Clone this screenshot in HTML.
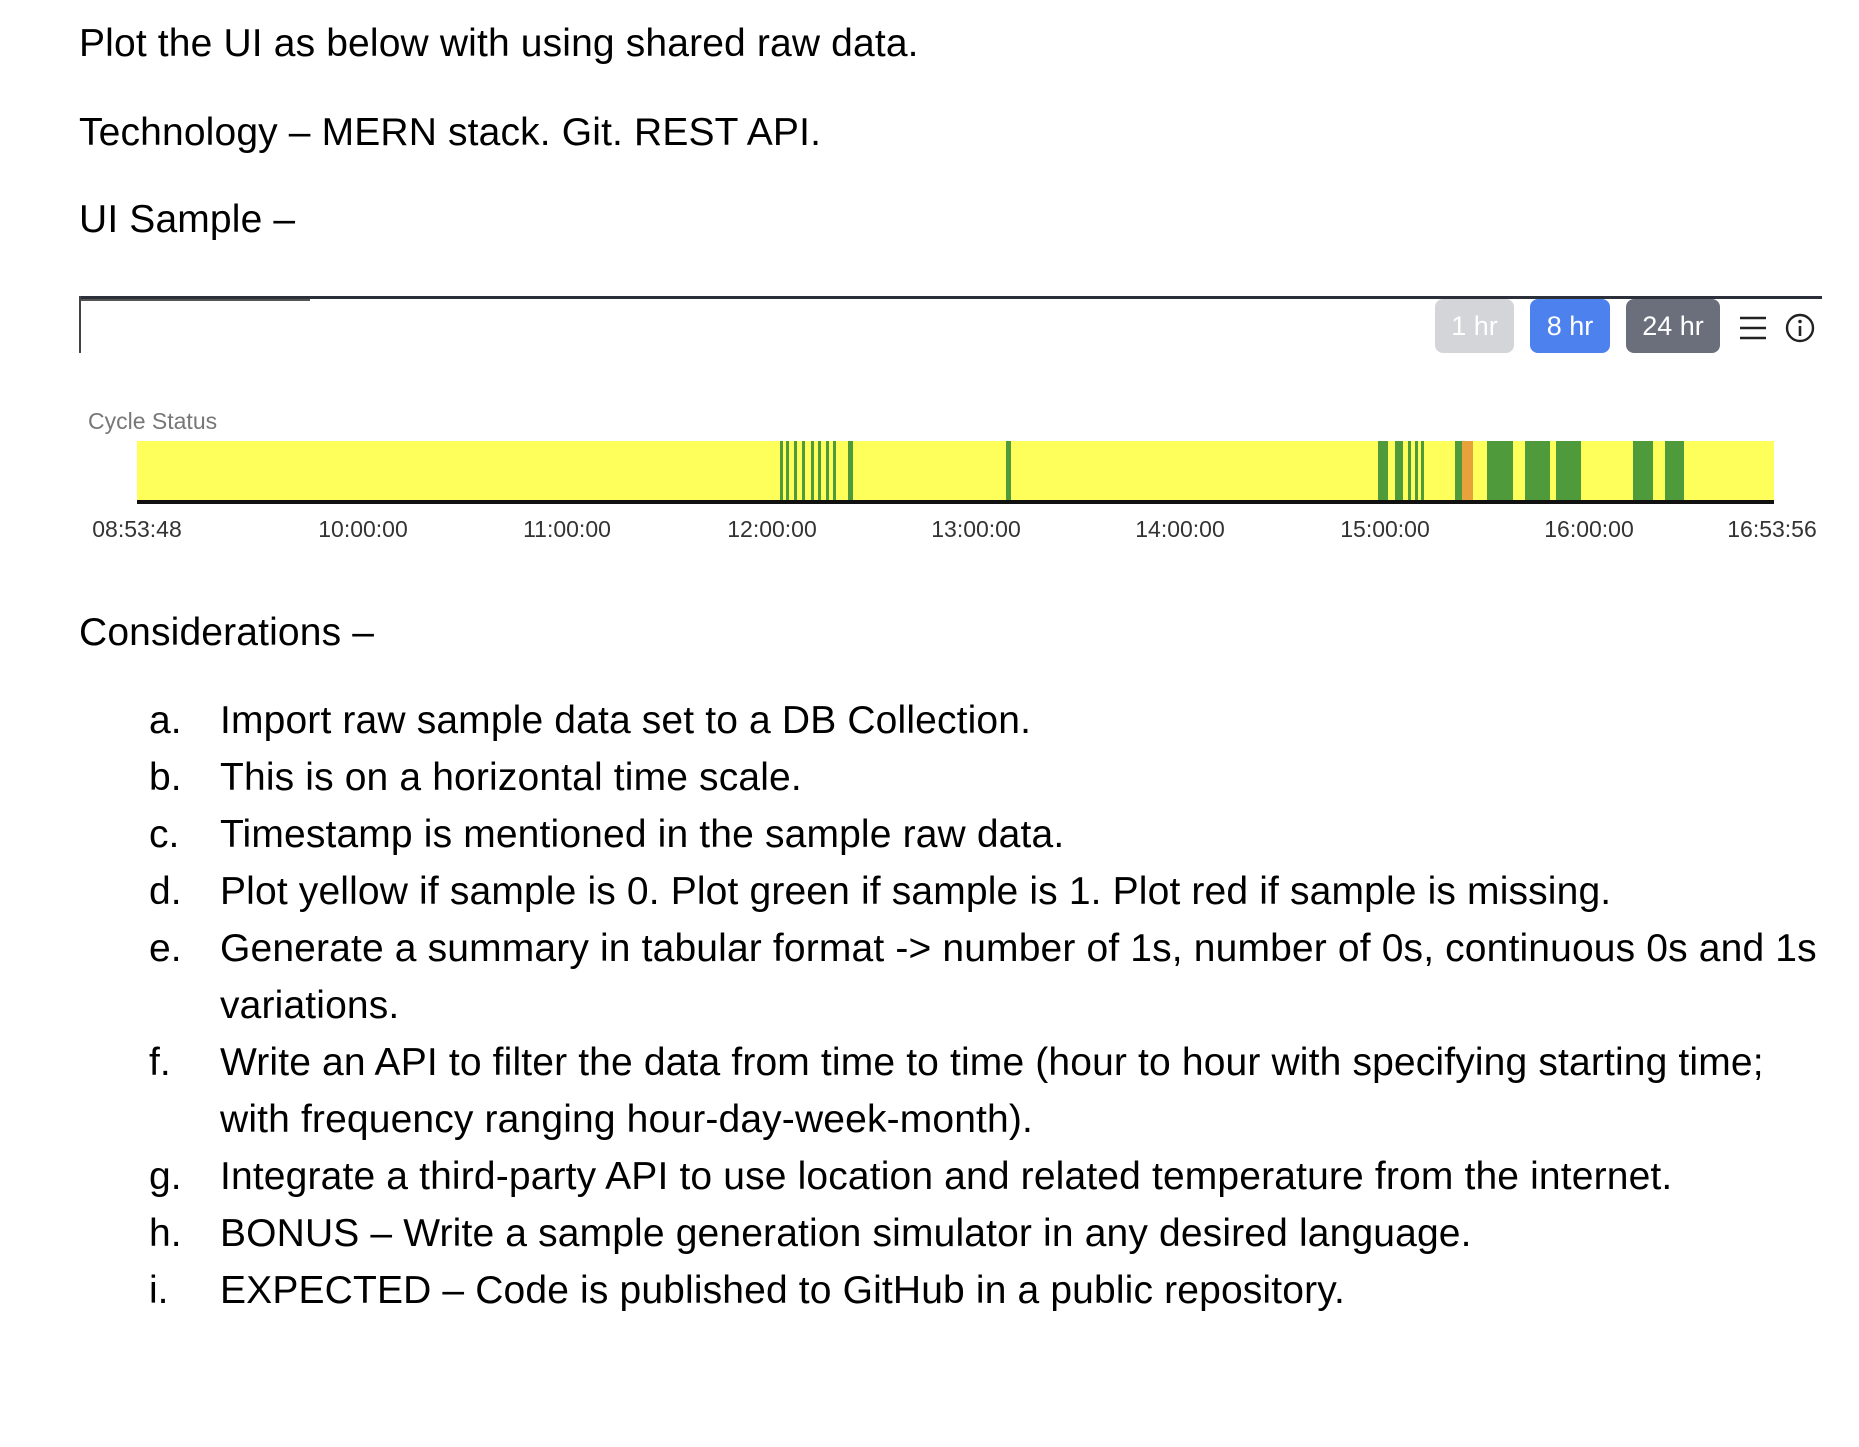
<!DOCTYPE html>
<html><head><meta charset="utf-8"><style>
*{margin:0;padding:0;box-sizing:border-box}
body{width:1859px;height:1447px;background:#fff;position:relative;overflow:hidden;font-family:"Liberation Sans",sans-serif;color:#000}
.t{position:absolute;font-size:39px;line-height:40px;white-space:nowrap;letter-spacing:0.15px}
.lt{position:absolute;font-size:39px;line-height:40px;left:149px}
.tk{position:absolute;top:515px;font-size:23px;line-height:28px;color:#333;transform:translateX(-50%);white-space:nowrap}
.g{position:absolute;top:441px;height:61px;background:#4f9a3b}
.btn{position:absolute;top:299px;height:54px;border-radius:8px;color:#fff;font-size:27px;line-height:54px;text-align:center}
</style></head><body>
<div class="t" style="left:79px;top:24px">Plot the UI as below with using shared raw data.</div>
<div class="t" style="left:79px;top:113px">Technology – MERN stack. Git. REST API.</div>
<div class="t" style="left:79px;top:200px">UI Sample –</div>

<div style="position:absolute;left:79px;top:296px;width:1743px;height:3px;background:#2b2f3a"></div>
<div style="position:absolute;left:79px;top:299px;width:231px;height:2px;background:#555"></div>
<div style="position:absolute;left:79px;top:296px;width:2px;height:57px;background:#444"></div>
<div class="btn" style="left:1435px;width:79px;background:#d3d5d9">1 hr</div>
<div class="btn" style="left:1530px;width:80px;background:#4d82ee">8 hr</div>
<div class="btn" style="left:1626px;width:94px;background:#6b6f7c">24 hr</div>
<svg style="position:absolute;left:1738px;top:314px" width="30" height="28" viewBox="0 0 30 28"><path d="M2 4H28M2 14H28M2 24H28" stroke="#222" stroke-width="2.6"/></svg>
<svg style="position:absolute;left:1784px;top:312px" width="32" height="32" viewBox="0 0 32 32"><circle cx="16" cy="16" r="13" fill="none" stroke="#222" stroke-width="2.4"/><circle cx="16" cy="9.5" r="1.8" fill="#222"/><path d="M16 14V24" stroke="#222" stroke-width="2.6"/></svg>

<div style="position:absolute;left:88px;top:407px;font-size:23px;line-height:28px;color:#777">Cycle Status</div>
<div style="position:absolute;left:137px;top:441px;width:1637px;height:61px;background:#ffff5c"></div>
<div class="g" style="left:780px;width:3px"></div>
<div class="g" style="left:786px;width:3px"></div>
<div class="g" style="left:794px;width:3px"></div>
<div class="g" style="left:802px;width:3px"></div>
<div class="g" style="left:811px;width:3px"></div>
<div class="g" style="left:818px;width:3px"></div>
<div class="g" style="left:826px;width:3px"></div>
<div class="g" style="left:833px;width:3px"></div>
<div class="g" style="left:848px;width:5px"></div>
<div class="g" style="left:1006px;width:5px"></div>
<div class="g" style="left:1378px;width:10px"></div>
<div class="g" style="left:1395px;width:8px"></div>
<div class="g" style="left:1408px;width:3px"></div>
<div class="g" style="left:1415px;width:3px"></div>
<div class="g" style="left:1421px;width:3px"></div>
<div class="g" style="left:1455px;width:7px"></div>
<div class="g" style="left:1462px;width:11px;background:#e8a23c"></div>
<div class="g" style="left:1487px;width:26px"></div>
<div class="g" style="left:1525px;width:25px"></div>
<div class="g" style="left:1556px;width:25px"></div>
<div class="g" style="left:1633px;width:20px"></div>
<div class="g" style="left:1665px;width:19px"></div>
<div style="position:absolute;left:137px;top:500px;width:1637px;height:4px;background:#111"></div>

<div class="tk" style="left:137px">08:53:48</div>
<div class="tk" style="left:363px">10:00:00</div>
<div class="tk" style="left:567px">11:00:00</div>
<div class="tk" style="left:772px">12:00:00</div>
<div class="tk" style="left:976px">13:00:00</div>
<div class="tk" style="left:1180px">14:00:00</div>
<div class="tk" style="left:1385px">15:00:00</div>
<div class="tk" style="left:1589px">16:00:00</div>
<div class="tk" style="left:1772px">16:53:56</div>

<div class="t" style="left:79px;top:613px">Considerations –</div>

<div class="lt" style="top:701px">a.</div><div class="t" style="left:220px;top:701px">Import raw sample data set to a DB Collection.</div>
<div class="lt" style="top:758px">b.</div><div class="t" style="left:220px;top:758px">This is on a horizontal time scale.</div>
<div class="lt" style="top:815px">c.</div><div class="t" style="left:220px;top:815px">Timestamp is mentioned in the sample raw data.</div>
<div class="lt" style="top:872px">d.</div><div class="t" style="left:220px;top:872px">Plot yellow if sample is 0. Plot green if sample is 1. Plot red if sample is missing.</div>
<div class="lt" style="top:929px">e.</div><div class="t" style="left:220px;top:929px">Generate a summary in tabular format -&gt; number of 1s, number of 0s, continuous 0s and 1s</div>
<div class="t" style="left:220px;top:986px">variations.</div>
<div class="lt" style="top:1043px">f.</div><div class="t" style="left:220px;top:1043px">Write an API to filter the data from time to time (hour to hour with specifying starting time;</div>
<div class="t" style="left:220px;top:1100px">with frequency ranging hour-day-week-month).</div>
<div class="lt" style="top:1157px">g.</div><div class="t" style="left:220px;top:1157px">Integrate a third-party API to use location and related temperature from the internet.</div>
<div class="lt" style="top:1214px">h.</div><div class="t" style="left:220px;top:1214px">BONUS – Write a sample generation simulator in any desired language.</div>
<div class="lt" style="top:1271px">i.</div><div class="t" style="left:220px;top:1271px">EXPECTED – Code is published to GitHub in a public repository.</div>
</body></html>
